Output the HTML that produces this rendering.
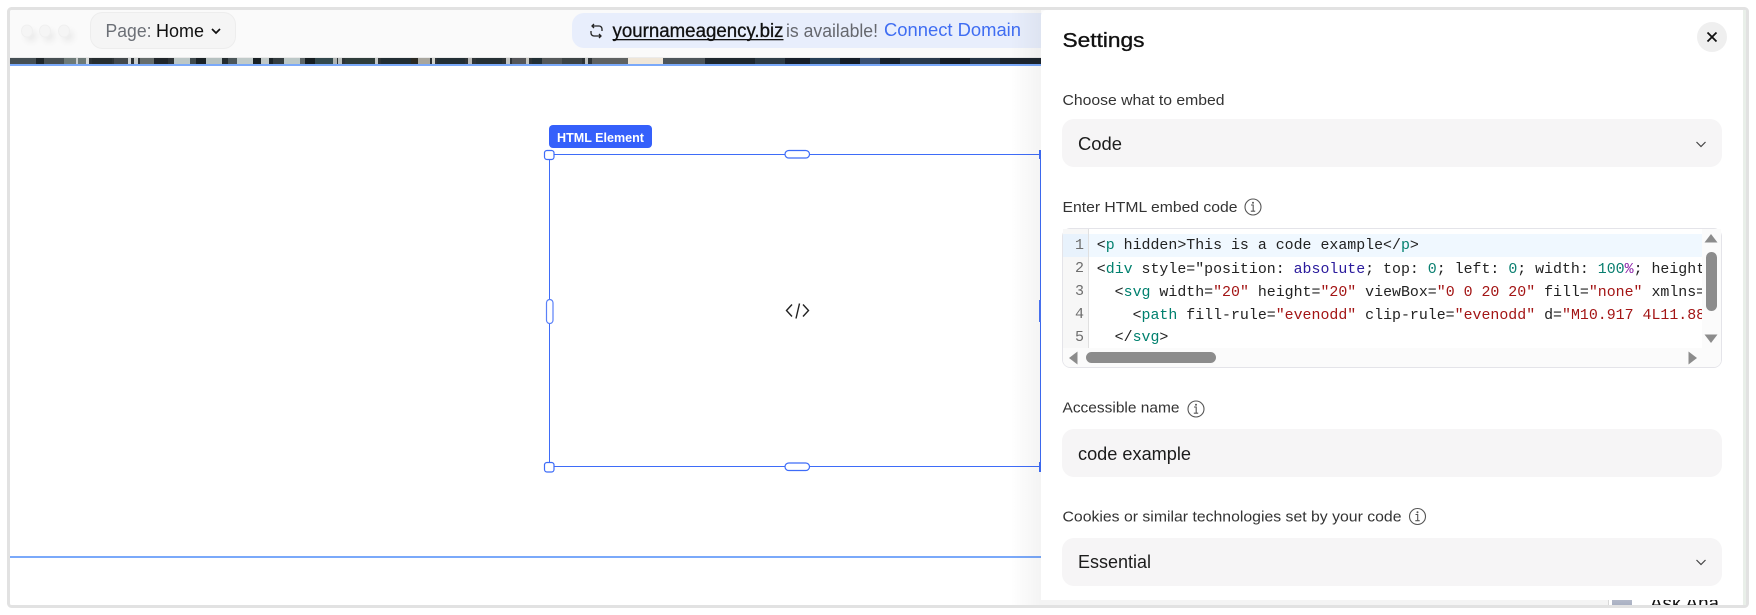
<!DOCTYPE html>
<html><head><meta charset="utf-8"><style>
html,body{margin:0;padding:0;background:#fff;width:1756px;height:615px;overflow:hidden}
svg{display:block}
text{font-family:"Liberation Sans",sans-serif;white-space:pre}
.m text,text.m{font-family:"Liberation Mono",monospace;font-size:14.92px;fill:#222}
.t{fill:#00806e}.s{fill:#a31515}.k{fill:#2a1a9c}.n{fill:#0a7f70}.p{fill:#8a1fa8}
.lab{font-size:15px;fill:#333}
.val{font-size:18px;fill:#1c1c1c}
.ln{font-family:"Liberation Mono",monospace;font-size:15px;fill:#6e6e6e;text-anchor:end}
</style></head><body>
<svg width="1756" height="615" viewBox="0 0 1756 615" xmlns="http://www.w3.org/2000/svg">
<defs>
<linearGradient id="sh" x1="0" x2="1" y1="0" y2="0"><stop offset="0" stop-color="#000" stop-opacity="0"/><stop offset="1" stop-color="#000" stop-opacity=".045"/></linearGradient>
<linearGradient id="th" x1="0" x2="0" y1="0" y2="1"><stop offset="0" stop-color="#c9cdd8"/><stop offset="1" stop-color="#9ea6bb"/></linearGradient>
<filter id="ds" x="-100%" y="-100%" width="300%" height="300%"><feGaussianBlur stdDeviation="3"/></filter>
<clipPath id="cc"><rect x="1090" y="229" width="612" height="119"/></clipPath>
</defs>
<rect width="1756" height="615" fill="#fff"/>
<rect x="10" y="10" width="1735" height="595" fill="#fff"/>
<rect x="10" y="10" width="1100" height="47" fill="#fafafa"/>
<rect x="10" y="57" width="1100" height="1" fill="#ebebeb"/>

<!-- strip -->
<g>
<rect x="10" y="58" width="1040" height="6" fill="#2e3437"/>
<rect x="10" y="58" width="26" height="6" fill="#454f54"/>
<rect x="36" y="58" width="8" height="6" fill="#1f272b"/>
<rect x="44" y="58" width="20" height="6" fill="#475053"/>
<rect x="64" y="58" width="22" height="6" fill="#6d7a78"/>
<rect x="76" y="58" width="2" height="6" fill="#c8cccb"/>
<rect x="86" y="58" width="3" height="6" fill="#d8dad8"/>
<rect x="92" y="58" width="20" height="6" fill="#272e30"/>
<rect x="114" y="58" width="14" height="6" fill="#43494c"/>
<rect x="128" y="58" width="3" height="6" fill="#d0d3d2"/>
<rect x="134" y="58" width="4" height="6" fill="#c8cccb"/>
<rect x="140" y="58" width="14" height="6" fill="#666d6c"/>
<rect x="154" y="58" width="14" height="6" fill="#20262a"/>
<rect x="174" y="58" width="16" height="6" fill="#bcc7c6"/>
<rect x="190" y="58" width="6" height="6" fill="#3f4a4d"/>
<rect x="196" y="58" width="10" height="6" fill="#1a2226"/>
<rect x="206" y="58" width="16" height="6" fill="#b6c1c0"/>
<rect x="222" y="58" width="6" height="6" fill="#242c2f"/>
<rect x="228" y="58" width="9" height="6" fill="#4c5659"/>
<rect x="237" y="58" width="16" height="6" fill="#c0cac9"/>
<rect x="253" y="58" width="8" height="6" fill="#192124"/>
<rect x="261" y="58" width="8" height="6" fill="#c0c8c7"/>
<rect x="269" y="58" width="4" height="6" fill="#1c2428"/>
<rect x="273" y="58" width="11" height="6" fill="#343d40"/>
<rect x="284" y="58" width="16" height="6" fill="#bcc8c7"/>
<rect x="300" y="58" width="5" height="6" fill="#5d6668"/>
<rect x="305" y="58" width="10" height="6" fill="#161e21"/>
<rect x="315" y="58" width="18" height="6" fill="#33494d"/>
<rect x="333" y="58" width="4" height="6" fill="#aeb4b2"/>
<rect x="338" y="58" width="4" height="6" fill="#b9bebc"/>
<rect x="345" y="58" width="30" height="6" fill="#2f3d3b"/>
<rect x="375" y="58" width="3" height="6" fill="#c4c8c6"/>
<rect x="381" y="58" width="30" height="6" fill="#222e33"/>
<rect x="411" y="58" width="7" height="6" fill="#2a2a24"/>
<rect x="418" y="58" width="12" height="6" fill="#a8a69e"/>
<rect x="432" y="58" width="3" height="6" fill="#cfd1cc"/>
<rect x="437" y="58" width="28" height="6" fill="#232f35"/>
<rect x="468" y="58" width="4" height="6" fill="#b8b8b6"/>
<rect x="476" y="58" width="26" height="6" fill="#263034"/>
<rect x="506" y="58" width="4" height="6" fill="#c2c4c2"/>
<rect x="512" y="58" width="14" height="6" fill="#55575a"/>
<rect x="526" y="58" width="3" height="6" fill="#c6c6c0"/>
<rect x="532" y="58" width="10" height="6" fill="#222f34"/>
<rect x="542" y="58" width="20" height="6" fill="#55595a"/>
<rect x="562" y="58" width="20" height="6" fill="#3c4345"/>
<rect x="585" y="58" width="3" height="6" fill="#bfc2c0"/>
<rect x="592" y="58" width="36" height="6" fill="#5f6262"/>
<rect x="628" y="58" width="35" height="6" fill="#efe6d8"/>
<rect x="663" y="58" width="42" height="6" fill="#4d555a"/>
<rect x="705" y="58" width="50" height="6" fill="#1e272e"/>
<rect x="755" y="58" width="30" height="6" fill="#2e3c46"/>
<rect x="785" y="58" width="25" height="6" fill="#161e28"/>
<rect x="810" y="58" width="30" height="6" fill="#263e54"/>
<rect x="840" y="58" width="20" height="6" fill="#141c26"/>
<rect x="860" y="58" width="20" height="6" fill="#3a5070"/>
<rect x="880" y="58" width="20" height="6" fill="#16202b"/>
<rect x="900" y="58" width="40" height="6" fill="#2a3a4c"/>
<rect x="940" y="58" width="30" height="6" fill="#151d26"/>
<rect x="970" y="58" width="30" height="6" fill="#253445"/>
<rect x="1000" y="58" width="50" height="6" fill="#1c252e"/>
</g>
<rect x="10" y="64" width="1040" height="2" fill="#7aa9fa"/>
<rect x="10" y="556" width="1040" height="2" fill="#7aa9fa"/>

<!-- dots -->
<g filter="url(#ds)" opacity=".1"><circle cx="31" cy="36" r="6" fill="#777"/><circle cx="49" cy="36" r="6" fill="#777"/><circle cx="68" cy="36" r="6" fill="#777"/></g>
<ellipse cx="27" cy="31" rx="5.5" ry="6" fill="#f5f5f5" stroke="#f0f0f0"/>
<ellipse cx="45" cy="31" rx="5.5" ry="6" fill="#f5f5f5" stroke="#f0f0f0"/>
<ellipse cx="64" cy="31" rx="5.5" ry="6" fill="#f5f5f5" stroke="#f0f0f0"/>

<!-- page pill -->
<rect x="90.5" y="12.5" width="145" height="36" rx="12" fill="#f5f5f5" stroke="#ededed"/>
<text x="105.5" y="37" font-size="18" fill="#6b6f76" textLength="46" lengthAdjust="spacingAndGlyphs">Page:</text>
<text x="156" y="37" font-size="18" fill="#111" textLength="48" lengthAdjust="spacingAndGlyphs">Home</text>
<path d="M212 29l4 4 4-4" fill="none" stroke="#111" stroke-width="1.7"/>

<!-- domain pill -->
<rect x="572" y="13" width="480" height="35" rx="12" fill="#e8eefc"/>
<path d="M602 31v-2a3 3 0 0 0-3-3h-7M594 24l-2 2 2 2M591 31v2a3 3 0 0 0 3 3h7M599 34l2 2-2 2" fill="none" stroke="#222" stroke-width="1.300"/>
<text x="612.500" y="37" font-size="19" fill="#111" stroke="#111" stroke-width=".3" textLength="171" lengthAdjust="spacingAndGlyphs">yournameagency.biz</text>
<rect x="612.500" y="39" width="171" height="1.300" fill="#111"/>
<text x="786" y="37" font-size="18" fill="#66686e" textLength="92" lengthAdjust="spacingAndGlyphs">is available!</text>
<text x="884" y="36" font-size="18" fill="#3f6df2" textLength="137" lengthAdjust="spacingAndGlyphs">Connect Domain</text>

<!-- selection -->
<rect x="549" y="154" width="500" height="1" fill="#3e6cf8"/>
<rect x="549" y="466" width="500" height="1" fill="#3e6cf8"/>
<rect x="549" y="154" width="1" height="313" fill="#3e6cf8"/>
<rect x="1040" y="154" width="1" height="313" fill="#3e6cf8"/>
<rect x="1039" y="300" width="4" height="22" fill="#4a75f8"/>
<rect x="1039" y="150" width="4" height="9" fill="#3e6cf8"/>
<rect x="1039" y="462" width="4" height="10" fill="#3e6cf8"/>
<rect x="549" y="125" width="103" height="23" rx="4" fill="#3560fb"/>
<text x="557" y="142" font-size="13" font-weight="bold" fill="#fff" textLength="87" lengthAdjust="spacingAndGlyphs">HTML Element</text>
<rect x="544.500" y="150.500" width="9.500" height="9" rx="2.500" fill="#fff" stroke="#3e6cf8" stroke-width="1.200"/>
<rect x="544.500" y="462.500" width="9.500" height="9.500" rx="2.500" fill="#fff" stroke="#3e6cf8" stroke-width="1.200"/>
<rect x="785" y="150.500" width="24.500" height="7.500" rx="3.750" fill="#fff" stroke="#3e6cf8" stroke-width="1.200"/>
<rect x="785" y="463" width="24.500" height="7.500" rx="3.750" fill="#fff" stroke="#3e6cf8" stroke-width="1.200"/>
<rect x="546.500" y="299.500" width="6.500" height="24" rx="3.250" fill="#fff" stroke="#5a80f8" stroke-width="1.200"/>
<path d="M792 304.500l-5.500 6 5.500 6M803 304.500l5.500 6-5.500 6M799.500 303.500l-3.500 15" fill="none" stroke="#222" stroke-width="1.400"/>

<!-- ask ana under panel -->
<rect x="1608" y="590" width="1" height="20" fill="#d8d8d8"/>
<rect x="1612" y="590" width="20" height="20" fill="url(#th)"/>
<text x="1650" y="610" font-size="20" fill="#111" textLength="69" lengthAdjust="spacingAndGlyphs">Ask Ana</text>

<!-- frame -->
<rect x="0" y="608" width="1756" height="7" fill="#fff"/>
<rect x="8.500" y="8.500" width="1739" height="598" rx="3" fill="none" stroke="#e2e2e2" stroke-width="3"/>
<rect x="1743" y="10" width="3" height="595" fill="#e9efe9"/>

<!-- panel -->
<rect x="1010" y="10" width="31" height="595" fill="url(#sh)"/>
<rect x="1041" y="600" width="567" height="5" fill="#f4f4f4"/>
<path d="M1047 10H1737a6 6 0 0 1 6 6V588a12 12 0 0 1-12 12H1053a12 12 0 0 1-12-12V16a6 6 0 0 1 6-6z" fill="#fff"/>

<text x="1062.500" y="47" font-size="20" fill="#111" stroke="#111" stroke-width=".35" textLength="82" lengthAdjust="spacingAndGlyphs">Settings</text>
<ellipse cx="1712" cy="37" rx="15" ry="15" fill="#efefef"/>
<path d="M1707.500 32.500l9 9M1716.500 32.500l-9 9" fill="none" stroke="#111" stroke-width="1.800"/>

<text class="lab" x="1062.500" y="105" textLength="162" lengthAdjust="spacingAndGlyphs">Choose what to embed</text>
<rect x="1062" y="119" width="660" height="48" rx="12" fill="#f6f5f6"/>
<text class="val" x="1078" y="150" textLength="44" lengthAdjust="spacingAndGlyphs">Code</text>
<path d="M1696.500 142l4.500 4.500 4.500-4.500" fill="none" stroke="#444" stroke-width="1.200"/>

<text class="lab" x="1062.500" y="212" textLength="175" lengthAdjust="spacingAndGlyphs">Enter HTML embed code</text>
<g fill="none" stroke="#555" stroke-width="1.100"><circle cx="1253" cy="207" r="8"/><path d="M1251 205h2.200v6M1250.800 211.200h4.400"/></g><circle cx="1253" cy="202.800" r="1" fill="#555"/>

<!-- code editor -->
<rect x="1062.500" y="228.500" width="659" height="139" rx="8" fill="#fff" stroke="#e4e4e9"/>
<rect x="1063" y="229" width="26" height="119" fill="#f7f7f7"/>
<rect x="1088" y="229" width="1" height="119" fill="#e0e0e0"/>
<rect x="1063" y="234" width="25" height="23" fill="#e8f2fc"/>
<rect x="1089" y="234" width="613" height="23" fill="#f0f8ff"/>
<rect x="1702" y="229" width="19" height="119" fill="#fbfbfb"/>
<path d="M1063 348H1721V360a7 7 0 0 1-7 7H1070a7 7 0 0 1-7-7z" fill="#fbfbfb"/>
<path d="M1711 234l6.500 8.500h-13z" fill="#8c8c8c"/>
<rect x="1706" y="252" width="11" height="59" rx="5.500" fill="#8c8c8c"/>
<path d="M1711 343l6.500-8.500h-13z" fill="#8c8c8c"/>
<path d="M1069 358l8.500-6.500v13z" fill="#8c8c8c"/>
<rect x="1086" y="352" width="130" height="11" rx="5.500" fill="#8c8c8c"/>
<path d="M1697 358l-8.500-6.500v13z" fill="#8c8c8c"/>
<text class="ln" x="1084" y="249">1</text>
<text class="ln" x="1084" y="272">2</text>
<text class="ln" x="1084" y="295">3</text>
<text class="ln" x="1084" y="318">4</text>
<text class="ln" x="1084" y="341">5</text>
<g clip-path="url(#cc)" class="m">
<text class="m" x="1096.800" y="249">&lt;<tspan class="t">p</tspan> hidden&gt;This is a code example&lt;/<tspan class="t">p</tspan>&gt;</text>
<text class="m" x="1096.800" y="273">&lt;<tspan class="t">div</tspan> style="position: <tspan class="k">absolute</tspan>; top: <tspan class="n">0</tspan>; left: <tspan class="n">0</tspan>; width: <tspan class="n">100</tspan><tspan class="p">%</tspan>; height: <tspan class="n">100</tspan><tspan class="p">%</tspan>;"&gt;</text>
<text class="m" x="1096.800" y="296">  &lt;<tspan class="t">svg</tspan> width=<tspan class="s">"20"</tspan> height=<tspan class="s">"20"</tspan> viewBox=<tspan class="s">"0 0 20 20"</tspan> fill=<tspan class="s">"none"</tspan> xmlns=<tspan class="s">"http"</tspan></text>
<text class="m" x="1096.800" y="319">    &lt;<tspan class="t">path</tspan> fill-rule=<tspan class="s">"evenodd"</tspan> clip-rule=<tspan class="s">"evenodd"</tspan> d=<tspan class="s">"M10.917 4L11.88</tspan></text>
<text class="m" x="1096.800" y="341">  &lt;/<tspan class="t">svg</tspan>&gt;</text>
</g>

<text class="lab" x="1062.500" y="412.500" textLength="117" lengthAdjust="spacingAndGlyphs">Accessible name</text>
<g fill="none" stroke="#555" stroke-width="1.100"><circle cx="1196" cy="409" r="8"/><path d="M1194 407h2.200v6M1193.800 413.200h4.400"/></g><circle cx="1196" cy="404.800" r="1" fill="#555"/>
<rect x="1062" y="429" width="660" height="48" rx="12" fill="#f6f5f6"/>
<text class="val" x="1078" y="460" textLength="113" lengthAdjust="spacingAndGlyphs">code example</text>

<text class="lab" x="1062.500" y="521.500" textLength="339" lengthAdjust="spacingAndGlyphs">Cookies or similar technologies set by your code</text>
<g fill="none" stroke="#555" stroke-width="1.100"><circle cx="1417.500" cy="516.500" r="8"/><path d="M1415.500 514.500h2.200v6M1415.300 520.700h4.400"/></g><circle cx="1417.500" cy="512.300" r="1" fill="#555"/>
<rect x="1062" y="538" width="660" height="48" rx="12" fill="#f6f5f6"/>
<text class="val" x="1078" y="568" textLength="73" lengthAdjust="spacingAndGlyphs">Essential</text>
<path d="M1696.500 560l4.500 4.500 4.500-4.500" fill="none" stroke="#444" stroke-width="1.200"/>
</svg>
</body></html>
